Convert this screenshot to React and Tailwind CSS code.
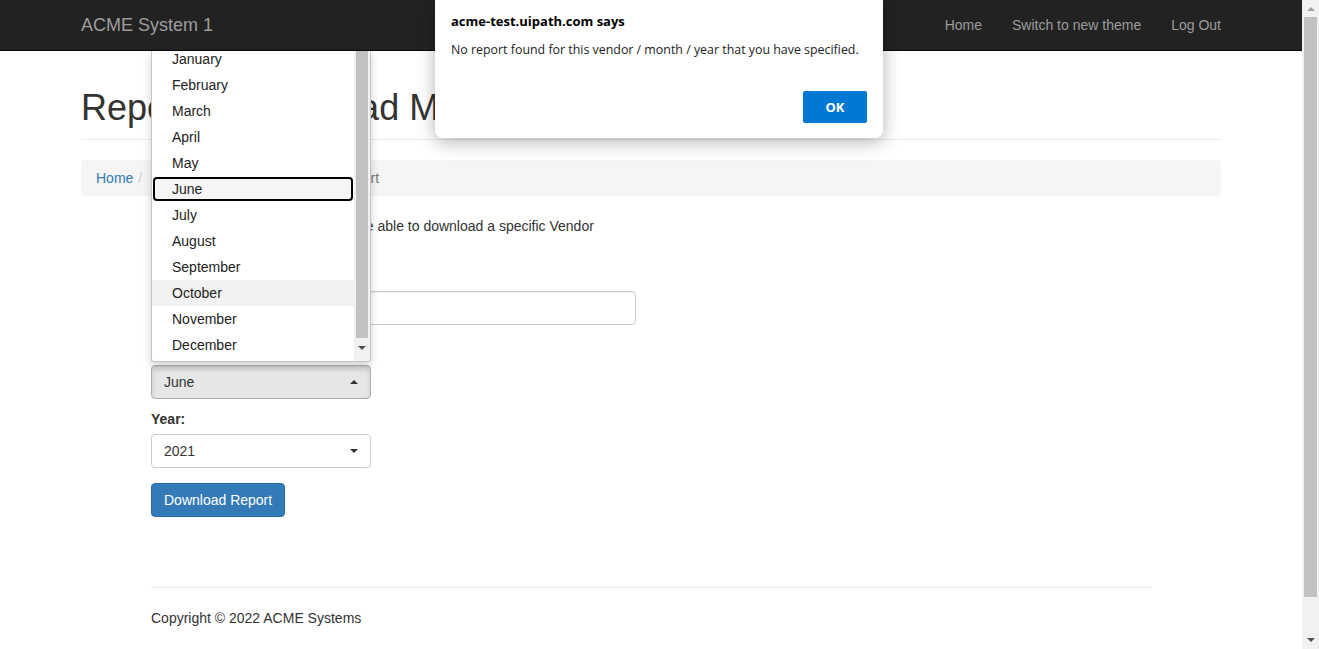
import React from "react";

const months = [
    "January", "February", "March", "April", "May", "June",
    "July", "August", "September", "October", "November", "December",
];

// small native-select style triangle
function Caret({ up = false, color = "#333" }) {
    return (
        <svg width="8" height="4" viewBox="0 0 8 4">
            <path d={up ? "M0 4 L4 0 L8 4 Z" : "M0 0 L8 0 L4 4 Z"} fill={color} />
        </svg>
    );
}

function MonthList() {
    return (
        <div className="absolute left-[151px] top-[51px] flex h-[311px] w-[220px] overflow-hidden rounded-b-[3px] border-x border-b border-[#c6c6c6] bg-white shadow-[0_3px_8px_rgba(0,0,0,0.2)]">
            <div className="-mt-[5px] w-[202px] pb-[3px]">
                {months.map((m) => {
                    if (m === "June") {
                        return (
                            <div key={m} className="m-px flex h-[24px] items-center rounded-[4px] border-2 border-black bg-[#f5f5f5] px-[17px] text-[#222]">
                                {m}
                            </div>
                        );
                    }
                    return (
                        <div key={m} className={"flex h-[26px] items-center px-[20px] text-[#222] " + (m === "October" ? "bg-[#f2f2f2]" : "")}>
                            {m}
                        </div>
                    );
                })}
            </div>
            <div className="flex w-[16px] flex-col items-center bg-[#f1f1f1]">
                <div className="h-[287px] w-[12px] bg-[#c1c1c1]" />
                <div className="mt-[8px]">
                    <Caret color="#505050" />
                </div>
            </div>
        </div>
    );
}

function AlertDialog() {
    return (
        <div className="absolute left-[435px] top-0 h-[138px] w-[448px] rounded-b-[8px] bg-white px-[16px] font-['Open_Sans',sans-serif] text-black shadow-[0_4px_18px_rgba(0,0,0,0.3)]">
            <div className="pt-[12px] text-[13px] font-bold leading-[18px]">acme-test.uipath.com says</div>
            <div className="mt-[11px] whitespace-nowrap text-[12.4px] leading-[18px] text-[#222]">
                No report found for this vendor / month / year that you have specified.
            </div>
            <div className="mt-[32px] flex justify-end">
                <button className="h-[32px] w-[64px] rounded-[2px] bg-[#0078d4] text-[13px] font-bold text-white">OK</button>
            </div>
        </div>
    );
}

export default function App() {
    return (
        <div className="relative flex h-[649px] w-[1319px] overflow-hidden bg-white font-['Liberation_Sans',Arial,sans-serif] text-[14px] leading-[20px] text-[#333]">
            <div className="flex-1 overflow-hidden">
                {/* navbar */}
                <nav className="h-[51px] border-b border-[#080808] bg-[#222]">
                    <div className="mx-auto flex h-[50px] w-[1140px] items-center justify-between">
                        <span className="text-[18px] text-[#9d9d9d]">ACME System 1</span>
                        <ul className="-mr-[15px] flex text-[#9d9d9d]">
                            <li className="px-[15px]">Home</li>
                            <li className="px-[15px]">Switch to new theme</li>
                            <li className="px-[15px]">Log Out</li>
                        </ul>
                    </div>
                </nav>

                <div className="mx-auto w-[1140px]">
                    <div className="mt-[37px] border-b border-[#eee] pb-[11px]">
                        <h1 className="text-[36px] leading-[40px] font-medium">Reports - Download Monthly Report</h1>
                    </div>

                    <ol className="mt-[20px] flex h-[36px] items-center rounded-[4px] bg-[#f5f5f5] px-[15px]">
                        <li className="text-[#337ab7]">Home</li>
                        <li className="px-[5px] text-[#ccc]">/&nbsp;</li>
                        <li className="text-[#337ab7]">Reports</li>
                        <li className="px-[5px] text-[#ccc]">/&nbsp;</li>
                        <li className="text-[#777]">Download Monthly Report</li>
                    </ol>

                    <div className="ml-[70px] mt-[20px]">
                        <p className="w-[485px]">
                            Using this page the users should be able to download a specific Vendor
                            <br />
                            monthly report.
                        </p>

                        <label className="mt-[10px] block font-bold">Vendor Tax ID:</label>
                        <div className="mt-[5px] h-[34px] w-[485px] rounded-[4px] border border-[#ccc] bg-white shadow-[inset_0_1px_1px_rgba(0,0,0,0.075)]" />

                        <label className="mt-[15px] block font-bold">Month:</label>
                        <div className="mt-[5px] flex h-[34px] w-[220px] items-center justify-between rounded-[4px] border border-[#adadad] bg-[#e6e6e6] pl-[12px] pr-[12px] shadow-[inset_0_3px_5px_rgba(0,0,0,0.125)]">
                            <span>June</span>
                            <Caret up />
                        </div>

                        <label className="mt-[10px] block font-bold">Year:</label>
                        <div className="mt-[5px] flex h-[34px] w-[220px] items-center justify-between rounded-[4px] border border-[#ccc] bg-white pl-[12px] pr-[12px]">
                            <span>2021</span>
                            <Caret />
                        </div>

                        <button className="mt-[15px] h-[34px] rounded-[4px] border border-[#2e6da4] bg-[#337ab7] px-[12px] text-white">
                            Download Report
                        </button>

                        <div className="mt-[70px] w-[1001px] border-t border-[#eee]" />
                        <p className="mt-[20px]">Copyright © 2022 ACME Systems</p>
                    </div>
                </div>
            </div>

            {/* page scrollbar */}
            <div className="flex w-[17px] flex-col items-center bg-[#f1f1f1]">
                <div className="flex h-[17px] items-center">
                    <Caret up color="#a3a3a3" />
                </div>
                <div className="h-[580px] w-[13px] bg-[#c1c1c1]" />
                <div className="mt-[41px]">
                    <Caret color="#505050" />
                </div>
            </div>

            <MonthList />
            <AlertDialog />
        </div>
    );
}
